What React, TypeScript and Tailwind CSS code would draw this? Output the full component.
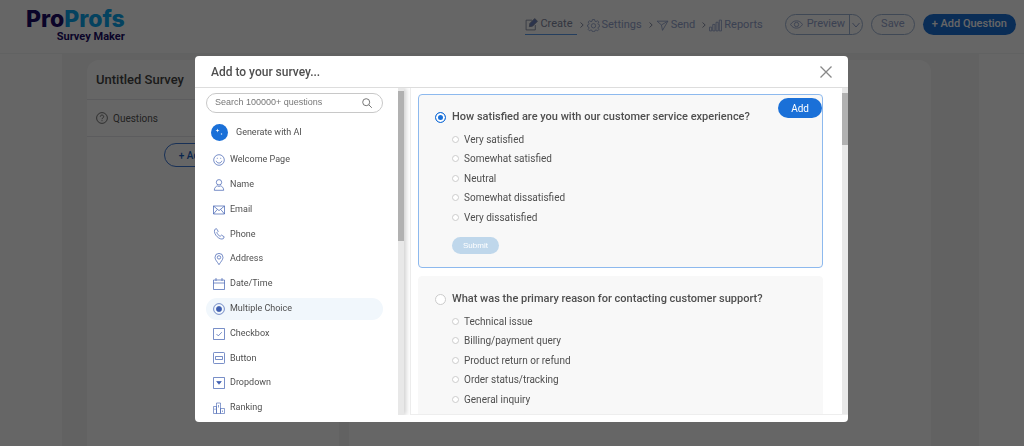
import type { ReactNode } from "react";

const QUESTION_TYPES = [
  { id: "welcome", label: "Welcome Page" },
  { id: "name", label: "Name" },
  { id: "email", label: "Email" },
  { id: "phone", label: "Phone" },
  { id: "address", label: "Address" },
  { id: "date", label: "Date/Time" },
  { id: "multiple", label: "Multiple Choice" },
  { id: "checkbox", label: "Checkbox" },
  { id: "button", label: "Button" },
  { id: "dropdown", label: "Dropdown" },
  { id: "ranking", label: "Ranking" },
];

const TEMPLATES = [
  {
    id: "satisfaction",
    title: "How satisfied are you with our customer service experience?",
    options: [
      "Very satisfied",
      "Somewhat satisfied",
      "Neutral",
      "Somewhat dissatisfied",
      "Very dissatisfied",
    ],
  },
  {
    id: "reason",
    title: "What was the primary reason for contacting customer support?",
    options: [
      "Technical issue",
      "Billing/payment query",
      "Product return or refund",
      "Order status/tracking",
      "General inquiry",
    ],
  },
];

const TYPE_ICONS: Record<string, ReactNode> = {
  welcome: (
    <>
      <circle cx="6" cy="6" r="5.3" />
      <path d="M3.2 6.8c.5 3 5.1 3 5.6 0M4.3 3.8v1M7.7 3.8v1" />
    </>
  ),
  name: (
    <>
      <circle cx="6" cy="3.3" r="2.7" />
      <path d="M1.3 11.3c0-2.600 1.700-4 3-4.400 1 .6 2.400.6 3.400 0 1.300.4 3 1.800 3 4.400z" />
    </>
  ),
  email: (
    <path d="M.5 2h11v8H.5zM.5 2L6 6.6 11.5 2M.5 10l3.8-4.6M11.5 10L7.7 5.4" />
  ),
  phone: (
    <path d="M1.7 1.6L3.4.6l1.8 2.7-1.3 1.3c.4 1.6 1.700 3 3.300 3.700l1.300-1.200 2.700 1.700-.9 1.900C7 12.600 0 6.500 1.700 1.600z" />
  ),
  address: (
    <>
      <path d="M6 11.700C4.300 8.800 2 6.800 2 4.400a4 4 0 0 1 8 0c0 2.400-2.300 4.400-4 7.300z" />
      <circle cx="6" cy="4.4" r="1.7" />
    </>
  ),
  date: <path d="M.5 2h11v9.500H.5zM.5 5h11M3 0v3M9 0v3" />,
  multiple: (
    <>
      <circle cx="6" cy="6" r="5.4" />
      <circle cx="6" cy="6" r="2.6" fill="currentColor" />
    </>
  ),
  checkbox: <path d="M.5.5h11v11H.5zM3.500 6l1.800 1.900 3.500-3.700" />,
  button: (
    <>
      <rect x=".5" y=".5" width="11" height="11" rx=".8" />
      <path d="M2.500 4.500h7v3h-7z" />
    </>
  ),
  dropdown: (
    <>
      <path d="M.5.5h11v11H.5z" />
      <path d="M3.700 4.500h4.600L6 7.300z" fill="currentColor" />
    </>
  ),
  ranking: (
    <path
      d="M.5 4.500h3v7h-3zM3.500 1h4v10.500h-4zM7.500 6.500h4v5h-4zM5.500 3v2.500M2 6.500V8M9.500 8.500V10"
      strokeWidth=".6"
    />
  ),
};

const TypeIcon = ({ id }: { id: string }) => (
  <svg
    viewBox="0 0 12 12"
    className="size-3 shrink-0 overflow-visible text-[#3f5fb0]"
    fill="none"
    stroke="currentColor"
    strokeWidth=".7"
    aria-hidden="true"
  >
    {TYPE_ICONS[id]}
  </svg>
);

const NavIcon = ({ children }: { children: ReactNode }) => (
  <svg
    viewBox="0 0 24 24"
    className="size-[13px] shrink-0"
    fill="none"
    stroke="currentColor"
    strokeWidth="1.6"
    aria-hidden="true"
  >
    {children}
  </svg>
);

const Chevron = () => (
  <svg viewBox="0 0 4 8" className="h-2 w-1" fill="none" stroke="#8b93a8" aria-hidden="true">
    <path d="M.5 1.500L3.200 4 .5 6.500" />
  </svg>
);

const TopBar = () => (
  <header className="flex h-[54px] items-start justify-between border-b border-gray-100 pr-2 pl-[26px]">
    <a href="#home" className="flex flex-col items-end pt-[7px] font-bold">
      <span className="font-['Inter',sans-serif] text-[23px] leading-6 font-extrabold text-[#1a0a66]">
        Pro<span className="text-[#0ba5ee]">Profs</span>
      </span>
      <span className="text-[11px] leading-3 text-[#1a0a66]">Survey Maker</span>
    </a>

    <div className="flex items-center pt-3.5 text-[11px] text-[#93a3cd]">
      <nav className="mr-[22px] flex items-center gap-[3px]">
        <a
          href="#create"
          className="flex h-[21px] items-center gap-0.5 border-b border-[#5b9bea] pr-1 text-[#8088a0]"
        >
          <NavIcon>
            <path d="M13 4H2v18h17v-9" />
            <path d="M8 16l1-6 9-9 5 5-9 9z" fill="#6f83bd" />
          </NavIcon>
          Create
        </a>
        <Chevron />
        <a href="#settings" className="flex items-center gap-0.5 pt-0.5">
          <NavIcon>
            <path d="M10 1h4l.6 3 2.200.9 2.600-1.700 2.400 2.500-1.600 2.600.9 2.200 2.400.5v3l-2.400.6-.9 2.200 1.600 2.600-2.400 2.400-2.600-1.600-2.200.9-.6 2.400h-4l-.6-2.400-2.200-.9-2.600 1.600-2.400-2.400 1.600-2.600-.9-2.200L1 14v-3l1.900-.5.9-2.200-1.600-2.600 2.400-2.500 2.600 1.700L9.400 4z" />
            <circle cx="12" cy="12.500" r="4" />
          </NavIcon>
          Settings
        </a>
        <span className="pl-1">
          <Chevron />
        </span>
        <a href="#send" className="flex items-center gap-0.5 pt-0.5">
          <NavIcon>
            <path d="M2 4h20L12 21l-2-10zM10 11l12-7" />
          </NavIcon>
          Send
        </a>
        <span className="pl-1">
          <Chevron />
        </span>
        <a href="#reports" className="flex items-center gap-0.5 pt-0.5">
          <NavIcon>
            <path d="M1 15h4v7H1zM7 10h4v12H7zM13 6h4v16h-4zM19 2h4v20h-4z" />
          </NavIcon>
          Reports
        </a>
      </nav>

      <div className="flex items-center gap-2">
        <div className="flex h-[21px] rounded-full border border-[#9fb4d4]">
          <button type="button" className="flex items-center gap-1 px-1">
            <NavIcon>
              <path d="M1 12c5-9 17-9 22 0-5 9-17 9-22 0z" />
              <circle cx="12" cy="12" r="4" />
            </NavIcon>
            Preview
          </button>
          <button type="button" aria-label="Preview options" className="border-l border-[#9fb4d4] px-0.5">
            <svg viewBox="0 0 8 8" className="size-2" fill="none" stroke="currentColor" aria-hidden="true">
              <path d="M.5 2L4 6l3.500-4" />
            </svg>
          </button>
        </div>
        <button type="button" className="h-[21px] rounded-full border border-[#9fb4d4] px-[9px]">
          Save
        </button>
        <button type="button" className="h-[21px] rounded-full bg-[#1a70d8] px-[9px] font-medium text-white">
          + Add Question
        </button>
      </div>
    </div>
  </header>
);

const Workspace = () => (
  <main className="mr-[45px] ml-[62px] flex flex-1 gap-2.5 bg-[#f6f6f6] pt-1.5 pr-12 pl-[25px]">
    <section className="w-[252px] rounded-t-xl bg-white">
      <h1 className="flex h-10 items-center border-b border-gray-200 px-[9px] text-[13px] font-medium text-[#444]">
        Untitled Survey
      </h1>
      <div className="flex h-[37px] items-center gap-[5px] border-b border-gray-200 px-[9px] text-[10px] text-[#555]">
        <svg
          viewBox="0 0 12 12"
          className="size-3"
          fill="none"
          stroke="currentColor"
          strokeWidth=".8"
          aria-hidden="true"
        >
          <circle cx="6" cy="6" r="5.4" />
          <path d="M4.300 4.700c0-2.200 3.400-2.200 3.400 0C7.700 6 6 5.700 6 7.200M6 8.200v1" />
        </svg>
        Questions
      </div>
      <div className="flex justify-center pt-1.5">
        <button
          type="button"
          className="h-6 rounded-full border border-[#3c78d8] px-3.5 text-[10px] font-medium text-[#1a5fc0]"
        >
          + Add Question
        </button>
      </div>
    </section>
    <section className="flex-1 rounded-t-xl bg-white" />
  </main>
);

const TypeList = () => (
  <aside className="relative z-10 flex w-[209px] shrink-0 text-[9px] shadow-[2px_0_5px_rgba(0,0,0,0.2)]">
    <div className="flex min-w-0 flex-1 flex-col pr-[15px] pl-[11px]">
      <div className="mt-[5px] flex h-5 shrink-0 items-center rounded-full border border-[#c8c8c8] pr-2.5 pl-2">
        <input
          type="search"
          aria-label="Search questions"
          placeholder="Search 100000+ questions"
          className="min-w-0 flex-1 font-['Liberation_Sans',sans-serif] outline-none placeholder:text-[#777]"
        />
        <svg viewBox="0 0 10 10" className="size-2.5" fill="none" stroke="#777" aria-hidden="true">
          <circle cx="4.2" cy="4.2" r="3.5" />
          <path d="M6.800 6.800l3 3" />
        </svg>
      </div>
      <button type="button" className="mt-[11px] flex h-[17px] shrink-0 items-center gap-2 pl-[5px]">
        <svg viewBox="0 0 17 17" className="size-[17px]" aria-hidden="true">
          <circle cx="8.5" cy="8.5" r="8.5" fill="#1a70d8" />
          <path
            d="M6.500 4.500l.5 1.500 1.500.5L7 7l-.5 1.500L6 7l-1.500-.5L6 6zM10.500 8.800l.3.900.9.300-.9.300-.3.900-.3-.9-.9-.3.900-.3z"
            fill="#fff"
          />
        </svg>
        Generate with AI
      </button>
      <ul className="mt-[11px] -mb-px flex min-h-0 flex-1 flex-col justify-between">
        {QUESTION_TYPES.map(({ id, label }) => (
          <li key={id} className="flex h-4 items-center">
            <button
              type="button"
              className={
                id === "multiple"
                  ? "flex h-[22px] w-full items-center gap-[5px] rounded-full bg-[#f1f7fc] pl-[7px]"
                  : "flex h-4 w-full items-center gap-[5px] pl-[7px]"
              }
            >
              <TypeIcon id={id} />
              {label}
            </button>
          </li>
        ))}
      </ul>
    </div>
    <div className="w-1.5 bg-[#e8e8e8] pt-[3px]">
      <div className="h-[150px] bg-[#b1b1b1]" />
    </div>
  </aside>
);

type CardProps = {
  template: (typeof TEMPLATES)[number];
  selected: boolean;
};

const TemplateCard = ({ template, selected }: CardProps) => (
  <article
    className={
      selected
        ? "flex h-[174px] shrink-0 rounded-sm border border-[#8db9ee] bg-[#f8f8f8] pl-4"
        : "flex h-[174px] shrink-0 rounded-sm border border-[#f8f8f8] bg-[#f8f8f8] pl-4"
    }
  >
    <div className="flex-1 pt-3.5">
      <label className="flex h-4 items-center gap-1.5 text-[11px] font-medium">
        <input
          type="radio"
          name="template"
          defaultChecked={selected}
          className="size-[11px] appearance-none rounded-full border border-[#ccc] bg-white checked:border-[#1a70d8] checked:bg-[#1a70d8] checked:shadow-[inset_0_0_0_2px_#fff]"
        />
        {template.title}
      </label>
      <div className="mt-2 ml-[17px] flex h-[90px] flex-col justify-between">
        {template.options.map((option) => (
          <label key={option} className="flex h-3 items-center gap-[5px]">
            <input
              type="radio"
              name={template.id}
              className="size-[7px] appearance-none rounded-full border border-[#ccc] bg-white"
            />
            {option}
          </label>
        ))}
      </div>
      {selected && (
        <button
          type="button"
          className="mt-3.5 ml-[17px] h-[17px] rounded-full bg-[#bfd7eb] px-[11px] font-['Liberation_Sans',sans-serif] text-[8px] text-white"
        >
          Submit
        </button>
      )}
    </div>
    {selected && (
      <button type="button" className="mt-[3px] h-5 rounded-full bg-[#1a70d8] px-[13px] text-[10px] text-white">
        Add
      </button>
    )}
  </article>
);

const AddQuestionDialog = () => (
  <div className="fixed inset-0 flex justify-center bg-black/60 pt-14 pb-6 pl-[19px]">
    <div
      role="dialog"
      aria-modal="true"
      aria-labelledby="dialog-title"
      className="flex w-full max-w-[653px] flex-col overflow-hidden rounded-sm bg-white pb-[7px] text-[#4f4f4f]"
    >
      <div className="flex h-8 shrink-0 items-center justify-between border-b border-[#ddd] px-4">
        <h2 id="dialog-title" className="text-xs font-medium">
          Add to your survey...
        </h2>
        <button type="button" aria-label="Close">
          <svg viewBox="0 0 12 12" className="size-3" stroke="#888" strokeWidth="1.3" aria-hidden="true">
            <path d="M.5.5l11 11M11.500.5l-11 11" />
          </svg>
        </button>
      </div>
      <div className="flex min-h-0 flex-1 overflow-hidden text-[10px]">
        <TypeList />
        <div className="ml-1.5 flex min-w-0 flex-1 border-b border-l border-[#eee]">
          <div className="flex flex-1 flex-col gap-2 overflow-hidden pt-1.5 pr-[19px] pl-[7px]">
            {TEMPLATES.map((template, i) => (
              <TemplateCard key={template.id} template={template} selected={i === 0} />
            ))}
          </div>
          <div className="w-1.5 bg-[#e8e8e8] pt-[5px]">
            <div className="h-[52px] bg-[#b1b1b1]" />
          </div>
        </div>
      </div>
    </div>
  </div>
);

export default function App() {
  return (
    <div className="flex min-h-screen flex-col bg-white font-['Roboto',sans-serif]">
      <TopBar />
      <Workspace />
      <AddQuestionDialog />
    </div>
  );
}
